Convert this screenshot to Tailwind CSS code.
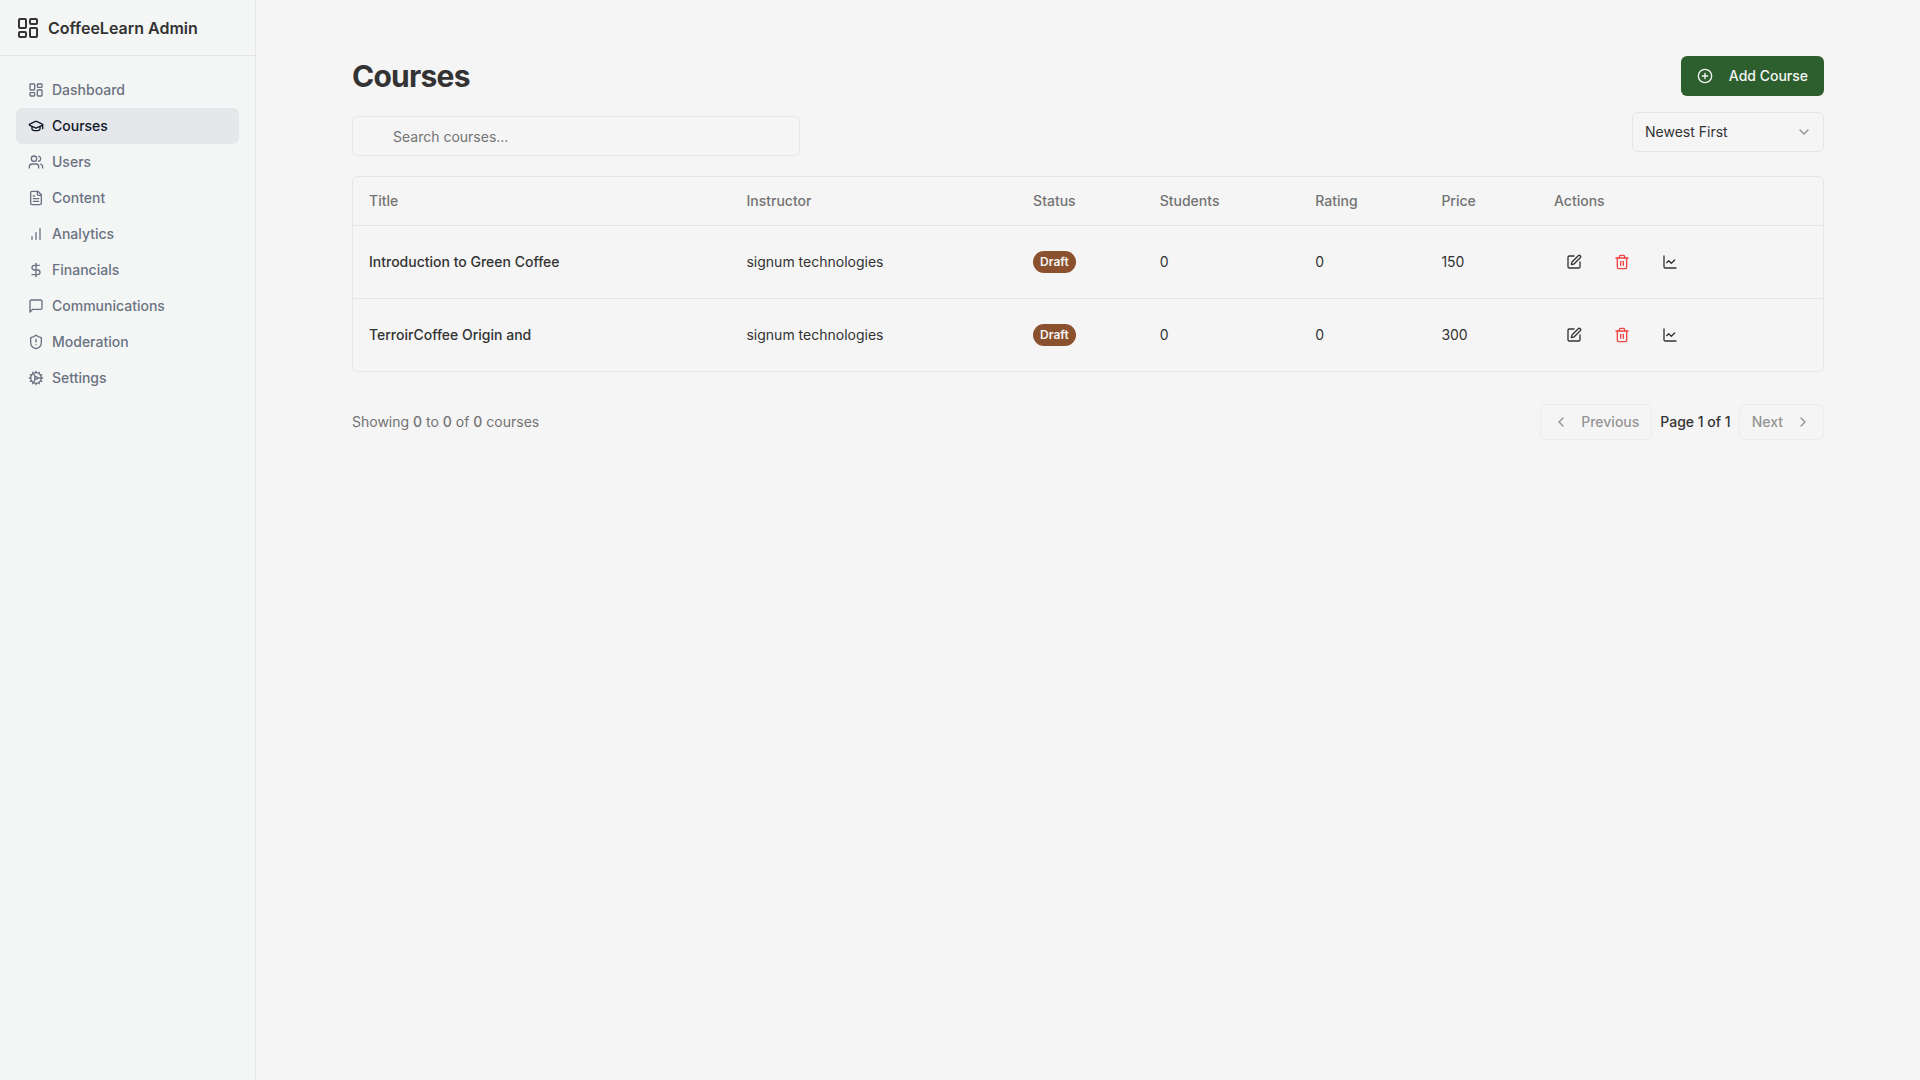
<!DOCTYPE html>
<html lang="en">
<head>
    <meta charset="UTF-8">
    <meta name="viewport" content="width=device-width, initial-scale=1.0">
    <title>CoffeeLearn Admin - Courses</title>
    <script src="https://cdn.jsdelivr.net/npm/@tailwindcss/browser@4"></script>
</head>
<body class="flex min-h-screen bg-[#f5f5f5] text-[#333333] font-['Inter',sans-serif]">
    <!-- Icon sprite -->
    <svg class="hidden" aria-hidden="true">
        <symbol id="i-dashboard" viewBox="0 0 24 24"><rect width="7" height="9" x="3" y="3" rx="1"/><rect width="7" height="5" x="14" y="3" rx="1"/><rect width="7" height="9" x="14" y="12" rx="1"/><rect width="7" height="5" x="3" y="16" rx="1"/></symbol>
        <symbol id="i-edit" viewBox="0 0 24 24"><path d="M12 3H5a2 2 0 0 0-2 2v14a2 2 0 0 0 2 2h14a2 2 0 0 0 2-2v-7"/><path d="M18.375 2.625a1 1 0 0 1 3 3l-9.013 9.014a2 2 0 0 1-.853.505l-2.873.84a.5.5 0 0 1-.62-.62l.84-2.873a2 2 0 0 1 .506-.852z"/></symbol>
        <symbol id="i-trash" viewBox="0 0 24 24"><path d="M3 6h18"/><path d="M19 6v14c0 1-1 2-2 2H7c-1 0-2-1-2-2V6"/><path d="M8 6V4c0-1 1-2 2-2h4c1 0 2 1 2 2v2"/><path d="M10 11v6"/><path d="M14 11v6"/></symbol>
        <symbol id="i-chart" viewBox="0 0 24 24"><path d="M3 3v16a2 2 0 0 0 2 2h16"/><path d="m19 9-5 5-4-4-3 3"/></symbol>
    </svg>

    <aside class="w-64 shrink-0 border-r border-[#e5e5e5] bg-[#f4f6f5]">
        <a href="/admin" class="flex h-14 items-center gap-2 border-b border-[#e5e5e5] px-4 font-semibold">
            <svg class="size-6 fill-none stroke-current stroke-2" stroke-linecap="round" stroke-linejoin="round"><use href="#i-dashboard"/></svg>
            CoffeeLearn Admin
        </a>
        <nav class="flex flex-col p-4 text-sm font-medium text-gray-500">
            <a href="/admin/dashboard" class="flex h-9 items-center gap-2 rounded-md px-3 hover:bg-gray-200">
                <svg class="size-4 fill-none stroke-current stroke-2" stroke-linecap="round" stroke-linejoin="round"><use href="#i-dashboard"/></svg>
                Dashboard
            </a>
            <a href="/admin/courses" class="flex h-9 items-center gap-2 rounded-md bg-gray-200 px-3 text-gray-900">
                <svg class="size-4 fill-none stroke-current stroke-2" viewBox="0 0 24 24" stroke-linecap="round" stroke-linejoin="round"><path d="M21.42 10.922a1 1 0 0 0-.019-1.838L12.83 5.18a2 2 0 0 0-1.66 0L2.6 9.08a1 1 0 0 0 0 1.832l8.57 3.908a2 2 0 0 0 1.66 0z"/><path d="M22 10v6"/><path d="M6 12.5V16a6 3 0 0 0 12 0v-3.5"/></svg>
                Courses
            </a>
            <a href="/admin/users" class="flex h-9 items-center gap-2 rounded-md px-3 hover:bg-gray-200">
                <svg class="size-4 fill-none stroke-current stroke-2" viewBox="0 0 24 24" stroke-linecap="round" stroke-linejoin="round"><path d="M16 21v-2a4 4 0 0 0-4-4H6a4 4 0 0 0-4 4v2"/><circle cx="9" cy="7" r="4"/><path d="M22 21v-2a4 4 0 0 0-3-3.87"/><path d="M16 3.13a4 4 0 0 1 0 7.75"/></svg>
                Users
            </a>
            <a href="/admin/content" class="flex h-9 items-center gap-2 rounded-md px-3 hover:bg-gray-200">
                <svg class="size-4 fill-none stroke-current stroke-2" viewBox="0 0 24 24" stroke-linecap="round" stroke-linejoin="round"><path d="M15 2H6a2 2 0 0 0-2 2v16a2 2 0 0 0 2 2h12a2 2 0 0 0 2-2V7Z"/><path d="M14 2v4a2 2 0 0 0 2 2h4"/><path d="M10 9H8"/><path d="M16 13H8"/><path d="M16 17H8"/></svg>
                Content
            </a>
            <a href="/admin/analytics" class="flex h-9 items-center gap-2 rounded-md px-3 hover:bg-gray-200">
                <svg class="size-4 fill-none stroke-current stroke-2" viewBox="0 0 24 24" stroke-linecap="round" stroke-linejoin="round"><path d="M12 20V10"/><path d="M18 20V4"/><path d="M6 20v-4"/></svg>
                Analytics
            </a>
            <a href="/admin/financials" class="flex h-9 items-center gap-2 rounded-md px-3 hover:bg-gray-200">
                <svg class="size-4 fill-none stroke-current stroke-2" viewBox="0 0 24 24" stroke-linecap="round" stroke-linejoin="round"><path d="M12 2v20"/><path d="M17 5H9.5a3.5 3.5 0 0 0 0 7h5a3.5 3.5 0 0 1 0 7H6"/></svg>
                Financials
            </a>
            <a href="/admin/communications" class="flex h-9 items-center gap-2 rounded-md px-3 hover:bg-gray-200">
                <svg class="size-4 fill-none stroke-current stroke-2" viewBox="0 0 24 24" stroke-linecap="round" stroke-linejoin="round"><path d="M21 15a2 2 0 0 1-2 2H7l-4 4V5a2 2 0 0 1 2-2h14a2 2 0 0 1 2 2z"/></svg>
                Communications
            </a>
            <a href="/admin/moderation" class="flex h-9 items-center gap-2 rounded-md px-3 hover:bg-gray-200">
                <svg class="size-4 fill-none stroke-current stroke-2" viewBox="0 0 24 24" stroke-linecap="round" stroke-linejoin="round"><path d="M20 13c0 5-3.5 7.5-7.66 8.95a1 1 0 0 1-.67-.01C7.5 20.5 4 18 4 13V6a1 1 0 0 1 1-1c2 0 4.5-1.2 6.24-2.72a1.17 1.17 0 0 1 1.52 0C14.51 3.81 17 5 19 5a1 1 0 0 1 1 1z"/><path d="M12 8v4"/><path d="M12 16h.01"/></svg>
                Moderation
            </a>
            <a href="/admin/settings" class="flex h-9 items-center gap-2 rounded-md px-3 hover:bg-gray-200">
                <svg class="size-4 fill-none stroke-current stroke-2" viewBox="0 0 24 24" stroke-linecap="round" stroke-linejoin="round"><path d="M12 20a8 8 0 1 0 0-16 8 8 0 0 0 0 16Z"/><path d="M12 14a2 2 0 1 0 0-4 2 2 0 0 0 0 4Z"/><path d="M12 2v2"/><path d="M12 22v-2"/><path d="m17 20.66-1-1.73"/><path d="M11 10.27 7 3.34"/><path d="m20.66 17-1.73-1"/><path d="m3.34 7 1.73 1"/><path d="M14 12h8"/><path d="M2 12h2"/><path d="m20.66 7-1.73 1"/><path d="m3.34 17 1.73-1"/><path d="m17 3.34-1 1.73"/><path d="m11 13.73-4 6.93"/></svg>
                Settings
            </a>
        </nav>
    </aside>

    <main class="min-w-0 flex-1 py-6">
        <div class="mx-auto max-w-screen-2xl p-8 text-sm">
            <div class="flex items-center justify-between">
                <h1 class="text-3xl font-bold tracking-tight">Courses</h1>
                <button type="button" class="flex h-10 items-center gap-4 rounded-md bg-[#2c5f2d] px-4 font-medium text-[#f5f5f5] hover:bg-[#2c5f2d]/90">
                    <svg class="size-4 fill-none stroke-current stroke-2" viewBox="0 0 24 24" stroke-linecap="round" stroke-linejoin="round"><circle cx="12" cy="12" r="10"/><path d="M8 12h8"/><path d="M12 8v8"/></svg>
                    Add Course
                </button>
            </div>

            <div class="mt-4 flex items-start justify-between">
                <div class="w-full max-w-md pt-1">
                    <input type="search" id="search" name="search" aria-label="Search courses" placeholder="Search courses..." class="h-10 w-full rounded-md border border-[#e5e5e5] pr-3 pl-10 placeholder:text-[#737373] focus:outline-none focus:ring-2 focus:ring-[#2c5f2d]">
                </div>
                <div class="relative w-48">
                    <select id="sort" name="sort" aria-label="Sort by" class="h-10 w-full appearance-none rounded-md border border-[#e5e5e5] px-3">
                        <option>Newest First</option>
                        <option>Oldest First</option>
                    </select>
                    <svg class="pointer-events-none absolute top-3 right-3 size-4 fill-none stroke-current stroke-2 opacity-50" viewBox="0 0 24 24" stroke-linecap="round" stroke-linejoin="round"><path d="m6 9 6 6 6-6"/></svg>
                </div>
            </div>

            <div class="mt-5 rounded-md border border-[#e5e5e5]">
                <table class="w-full text-left">
                    <thead>
                        <tr class="h-12 border-b border-[#e5e5e5] text-[#737373]">
                            <th class="px-4 font-medium">Title</th>
                            <th class="px-4 font-medium">Instructor</th>
                            <th class="px-4 font-medium">Status</th>
                            <th class="px-4 font-medium">Students</th>
                            <th class="px-4 font-medium">Rating</th>
                            <th class="px-4 font-medium">Price</th>
                            <th class="px-4 font-medium">Actions</th>
                        </tr>
                    </thead>
                    <tbody>
                        <tr class="border-b border-[#e5e5e5]">
                            <td class="p-4 font-medium">Introduction to Green Coffee</td>
                            <td class="p-4">signum technologies</td>
                            <td class="p-4"><span class="inline-flex rounded-full bg-[#8b502d] px-[7px] py-[3px] text-xs font-semibold text-[#f5f5f5]">Draft</span></td>
                            <td class="p-4">0</td>
                            <td class="p-4">0</td>
                            <td class="p-4">150</td>
                            <td class="p-4">
                                <div class="flex gap-2">
                                    <button type="button" aria-label="Edit" class="flex size-10 items-center justify-center rounded-md hover:bg-gray-200"><svg class="size-4 fill-none stroke-current stroke-2" stroke-linecap="round" stroke-linejoin="round"><use href="#i-edit"/></svg></button>
                                    <button type="button" aria-label="Delete" class="flex size-10 items-center justify-center rounded-md text-[#ef4444] hover:bg-gray-200"><svg class="size-4 fill-none stroke-current stroke-2" stroke-linecap="round" stroke-linejoin="round"><use href="#i-trash"/></svg></button>
                                    <button type="button" aria-label="Statistics" class="flex size-10 items-center justify-center rounded-md hover:bg-gray-200"><svg class="size-4 fill-none stroke-current stroke-2" stroke-linecap="round" stroke-linejoin="round"><use href="#i-chart"/></svg></button>
                                </div>
                            </td>
                        </tr>
                        <tr>
                            <td class="p-4 font-medium">TerroirCoffee Origin and</td>
                            <td class="p-4">signum technologies</td>
                            <td class="p-4"><span class="inline-flex rounded-full bg-[#8b502d] px-[7px] py-[3px] text-xs font-semibold text-[#f5f5f5]">Draft</span></td>
                            <td class="p-4">0</td>
                            <td class="p-4">0</td>
                            <td class="p-4">300</td>
                            <td class="p-4">
                                <div class="flex gap-2">
                                    <button type="button" aria-label="Edit" class="flex size-10 items-center justify-center rounded-md hover:bg-gray-200"><svg class="size-4 fill-none stroke-current stroke-2" stroke-linecap="round" stroke-linejoin="round"><use href="#i-edit"/></svg></button>
                                    <button type="button" aria-label="Delete" class="flex size-10 items-center justify-center rounded-md text-[#ef4444] hover:bg-gray-200"><svg class="size-4 fill-none stroke-current stroke-2" stroke-linecap="round" stroke-linejoin="round"><use href="#i-trash"/></svg></button>
                                    <button type="button" aria-label="Statistics" class="flex size-10 items-center justify-center rounded-md hover:bg-gray-200"><svg class="size-4 fill-none stroke-current stroke-2" stroke-linecap="round" stroke-linejoin="round"><use href="#i-chart"/></svg></button>
                                </div>
                            </td>
                        </tr>
                    </tbody>
                </table>
            </div>

            <div class="mt-8 flex items-center justify-between">
                <p class="text-[#737373]">Showing <span class="font-medium">0</span> to <span class="font-medium">0</span> of <span class="font-medium">0</span> courses</p>
                <div class="flex items-center gap-2 font-medium">
                    <button type="button" disabled class="flex h-9 items-center gap-3 rounded-md border border-[#e5e5e5] px-3 opacity-50">
                        <svg class="size-4 fill-none stroke-current stroke-2" viewBox="0 0 24 24" stroke-linecap="round" stroke-linejoin="round"><path d="m15 18-6-6 6-6"/></svg>
                        Previous
                    </button>
                    <span>Page 1 of 1</span>
                    <button type="button" disabled class="flex h-9 items-center gap-3 rounded-md border border-[#e5e5e5] px-3 opacity-50">
                        Next
                        <svg class="size-4 fill-none stroke-current stroke-2" viewBox="0 0 24 24" stroke-linecap="round" stroke-linejoin="round"><path d="m9 18 6-6-6-6"/></svg>
                    </button>
                </div>
            </div>
        </div>
    </main>
</body>
</html>
